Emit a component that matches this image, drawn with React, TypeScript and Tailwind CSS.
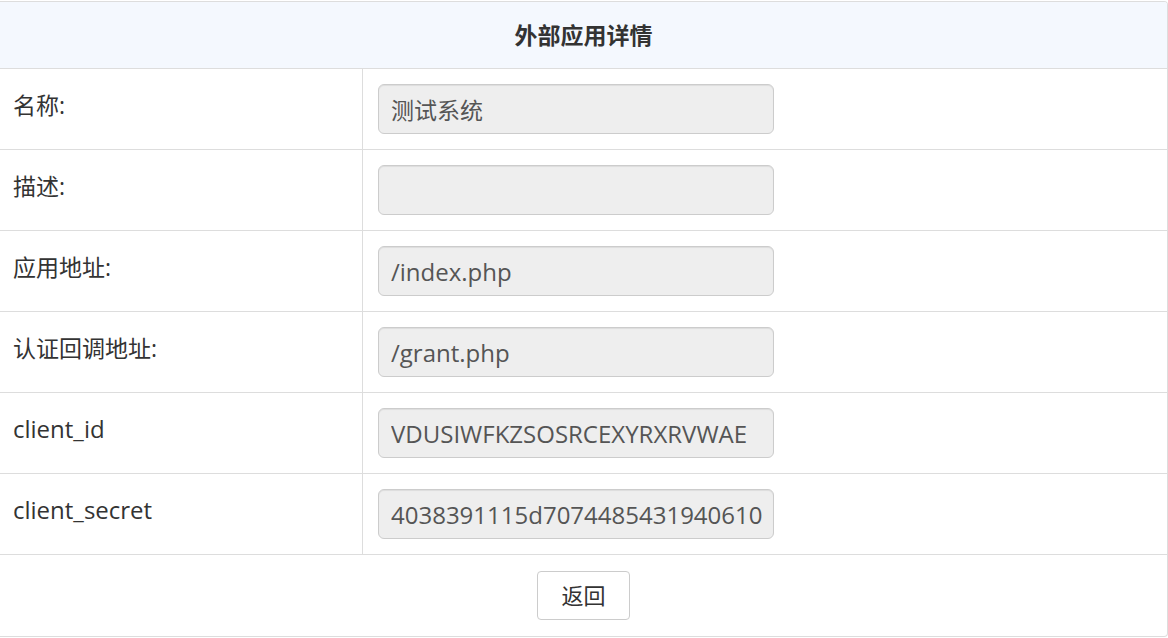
import React from 'react';

const rows = [
  { label: '名称:', value: '测试系统', latin: false },
  { label: '描述:', value: '', latin: false },
  { label: '应用地址:', value: '/index.php', latin: true },
  { label: '认证回调地址:', value: '/grant.php', latin: true },
  { label: 'client_id', value: 'VDUSIWFKZSOSRCEXYRXRVWAE', latin: true },
  { label: 'client_secret', value: '4038391115d7074485431940610', latin: true },
];

const font = '"Open Sans", "Noto Sans CJK SC", sans-serif';

export default function App() {
  return (
    <div className="min-h-screen bg-white pt-px" style={{ fontFamily: font }}>
      <div className="border-t border-r border-b border-[#dddddd] rounded-tr-[4px] rounded-br-[4px] overflow-hidden">
        {/* 标题 */}
        <div className="h-[67px] bg-[#f4f8fe] border-b border-[#dddddd] flex items-center justify-center">
          <h1 className="text-[23px] font-bold text-[#333333]">外部应用详情</h1>
        </div>

        {rows.map((row) => (
          <div key={row.label} className="flex border-b border-[#dddddd]">
            <div
              className={`w-[363px] shrink-0 border-r border-[#dddddd] pl-[13px] pt-[22px] leading-[28px] text-[#333333] ${
                row.label.startsWith('client') ? 'text-[24px]' : 'text-[23px]'
              }`}
            >
              {row.label}
            </div>
            <div className="flex-1 px-[15px] py-[15px]">
              <input
                readOnly
                disabled
                value={row.value}
                className={`w-[396px] h-[50px] rounded-[6px] border border-[#cccccc] bg-[#eeeeee] pl-[12px] pr-[4px] text-[#555555] shadow-[inset_0_1px_1px_rgba(0,0,0,0.075)] ${
                  row.latin ? 'text-[24px]' : 'text-[23px]'
                }`}
                style={{ fontFamily: font }}
              />
            </div>
          </div>
        ))}

        {/* 按钮 */}
        <div className="h-[81px] flex items-center justify-center">
          <button className="w-[93px] h-[49px] rounded-[4px] border border-[#cccccc] bg-white text-[22px] text-[#333333]">
            返回
          </button>
        </div>
      </div>
    </div>
  );
}
